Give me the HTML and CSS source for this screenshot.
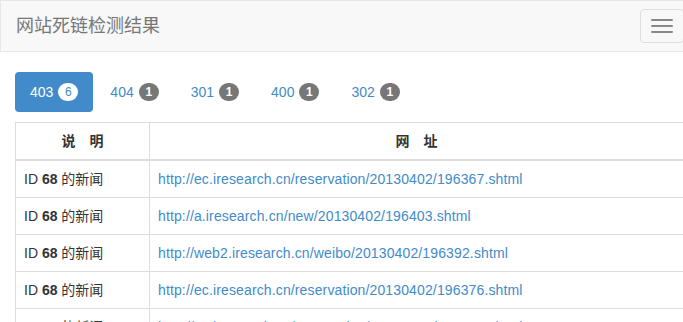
FILE: index.html
```html
<!DOCTYPE html>
<html lang="zh-CN">
<head>
<meta charset="utf-8">
<title>网站死链检测结果</title>
<link rel="stylesheet" href="styles.css">
</head>
<body>
<div class="page">
  <nav class="navbar">
    <span class="brand">网站死链检测结果</span>
    <button class="toggle" type="button" aria-label="menu">
      <span class="bar"></span><span class="bar"></span><span class="bar"></span>
    </button>
  </nav>
  <div class="container">
    <ul class="pills">
      <li class="pill active"><a href="#">403<span class="badge">6</span></a></li>
      <li class="pill"><a href="#">404<span class="badge">1</span></a></li>
      <li class="pill"><a href="#">301<span class="badge">1</span></a></li>
      <li class="pill"><a href="#">400<span class="badge">1</span></a></li>
      <li class="pill"><a href="#">302<span class="badge">1</span></a></li>
    </ul>
    <table class="result">
      <thead>
        <tr><th class="col-desc">说　明</th><th>网　址</th></tr>
      </thead>
      <tbody>
        <tr><td>ID <b>68</b> 的新闻</td><td><a href="#">http://ec.iresearch.cn/reservation/20130402/196367.shtml</a></td></tr>
        <tr><td>ID <b>68</b> 的新闻</td><td><a href="#">http://a.iresearch.cn/new/20130402/196403.shtml</a></td></tr>
        <tr><td>ID <b>68</b> 的新闻</td><td><a href="#">http://web2.iresearch.cn/weibo/20130402/196392.shtml</a></td></tr>
        <tr><td>ID <b>68</b> 的新闻</td><td><a href="#">http://ec.iresearch.cn/reservation/20130402/196376.shtml</a></td></tr>
        <tr><td>ID <b>68</b> 的新闻</td><td><a href="#">http://ec.iresearch.cn/reservation/20130402/196380.shtml</a></td></tr>
        <tr><td>ID <b>68</b> 的新闻</td><td><a href="#">http://a.iresearch.cn/new/20130402/196401.shtml</a></td></tr>
      </tbody>
    </table>
  </div>
</div>
</body>
</html>
```
FILE: styles.css
```css
html, body {
  margin: 0;
  padding: 0;
  overflow: hidden;
  background: #fff;
}
body {
  font-family: "Liberation Sans", "Noto Sans CJK SC", Arial, sans-serif;
  font-size: 14px;
  line-height: 20px;
  color: #333;
}
.page {
  width: 699px;
}
.navbar {
  display: flex;
  align-items: center;
  justify-content: space-between;
  height: 50px;
  background: #f8f8f8;
  border: 1px solid #e7e7e7;
  padding: 0 14px 0 15px;
}
.brand {
  font-size: 18px;
  line-height: 20px;
  color: #777;
}
.toggle {
  display: flex;
  flex-direction: column;
  gap: 4px;
  width: 44px;
  height: 34px;
  padding: 9px 10px;
  box-sizing: border-box;
  background: transparent;
  border: 1px solid #ddd;
  border-radius: 4px;
  justify-content: center;
}
.toggle .bar {
  display: block;
  width: 22px;
  height: 2px;
  border-radius: 1px;
  background: #888;
}
.container {
  padding: 0 15px;
}
.pills {
  list-style: none;
  margin: 20px 0 10px;
  padding: 0;
  display: flex;
  gap: 2px;
}
.pill a {
  display: block;
  padding: 10px 15px;
  border-radius: 4px;
  color: #428bca;
  text-decoration: none;
}
.pill.active a {
  background: #428bca;
  color: #fff;
}
.badge {
  display: inline-block;
  min-width: 10px;
  margin-left: 5px;
  padding: 3px 5px;
  font-size: 12px;
  font-weight: bold;
  line-height: 1;
  color: #fff;
  text-align: center;
  vertical-align: baseline;
  position: relative;
  top: -1px;
  background: #777;
  border-radius: 10px;
}
.pill.active .badge {
  background: #fff;
  color: #428bca;
  font-weight: normal;
}
.result {
  width: 100%;
  border-collapse: collapse;
  border: 1px solid #ddd;
}
.result th, .result td {
  padding: 8px;
  border: 1px solid #ddd;
  line-height: 20px;
  text-align: left;
  white-space: nowrap;
}
.result th {
  text-align: center;
  font-weight: bold;
  border-bottom-width: 2px;
}
.result .col-desc {
  width: 117px;
}
.result td a {
  color: #428bca;
  text-decoration: none;
  letter-spacing: 0.13px;
}
```
